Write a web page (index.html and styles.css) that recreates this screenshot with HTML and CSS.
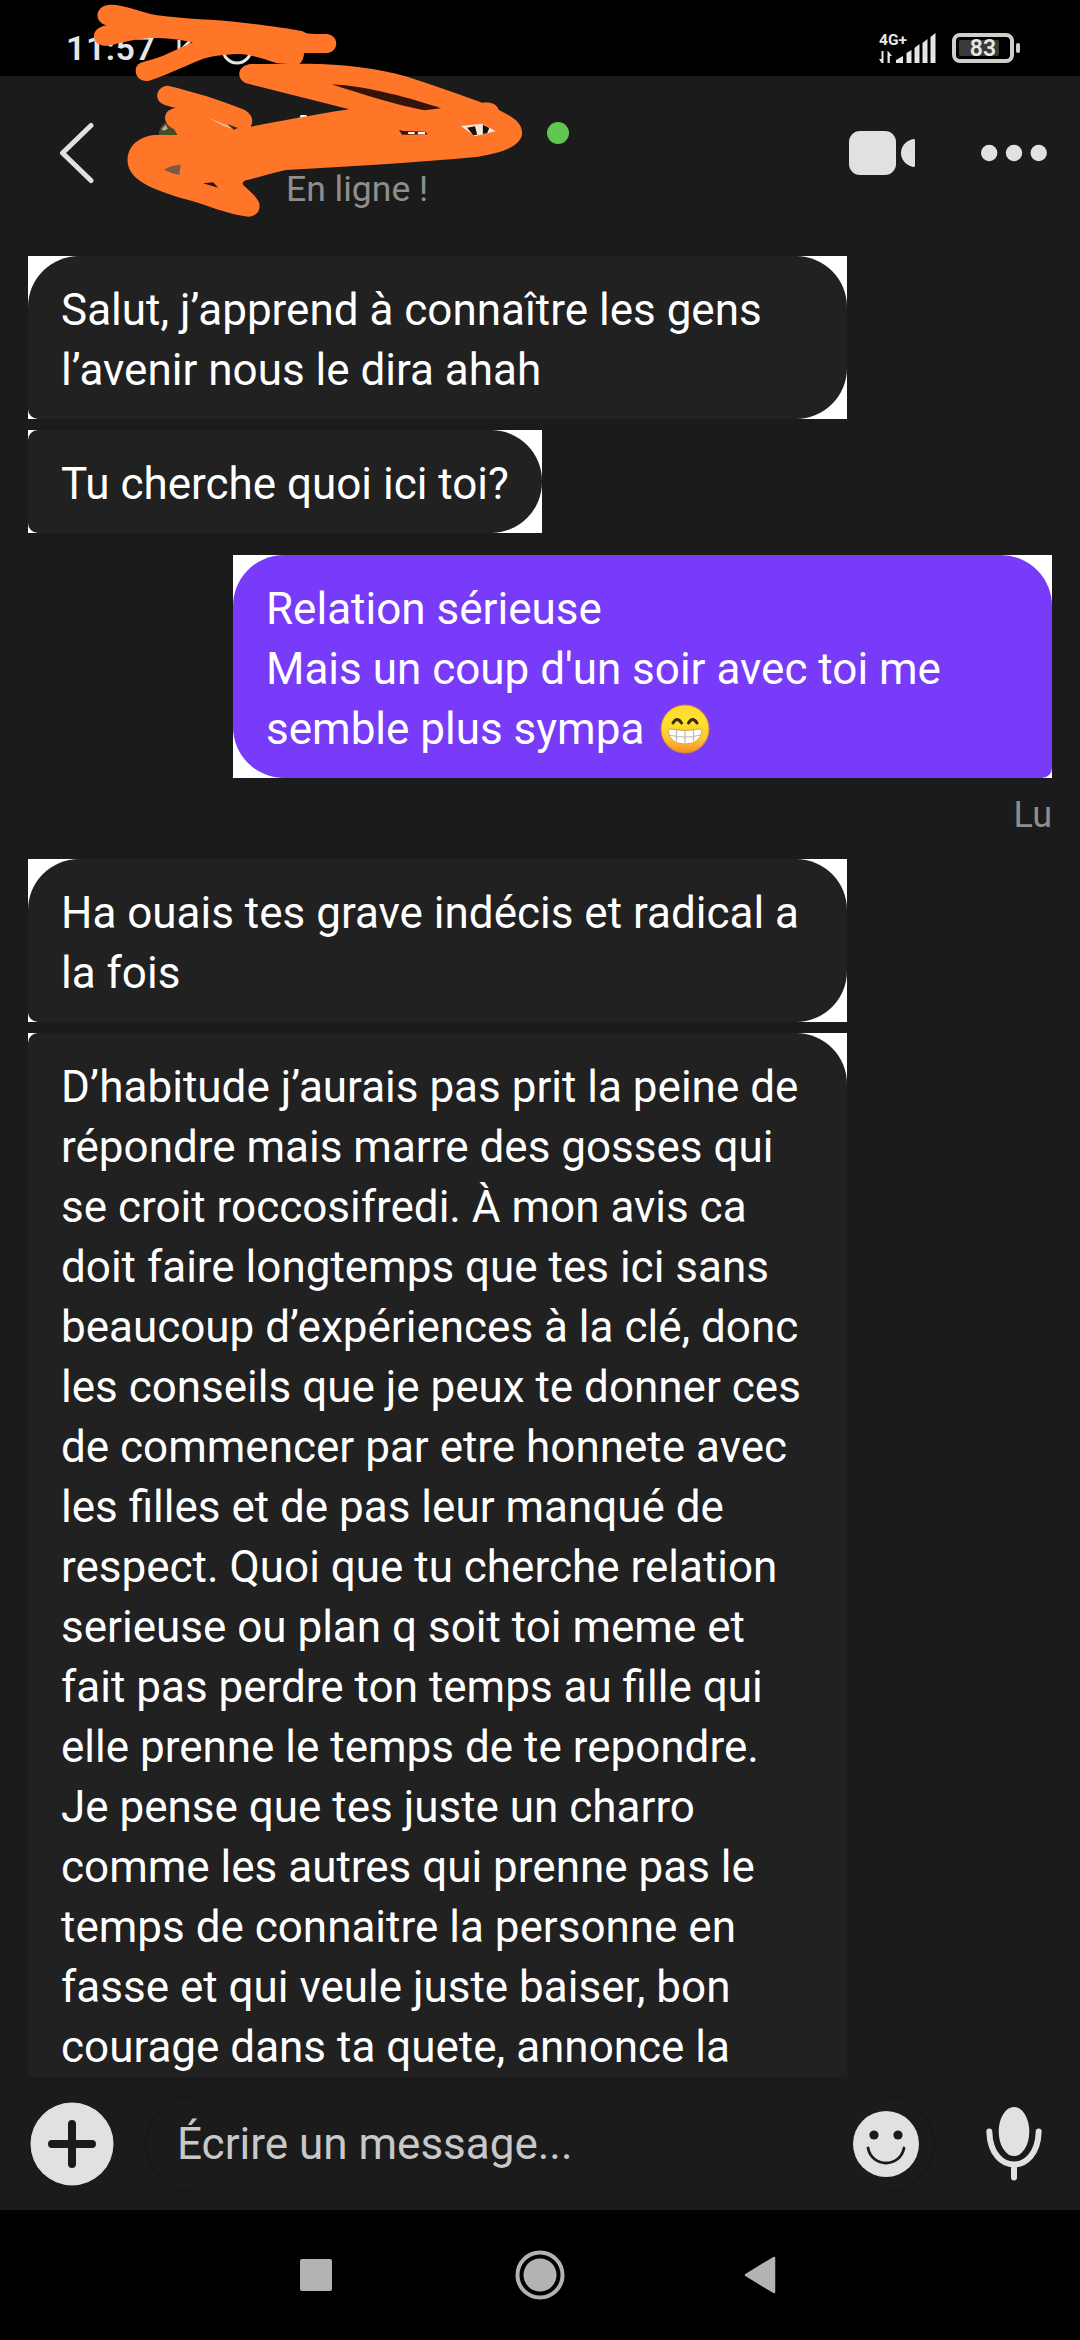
FILE: index.html
```html
<!DOCTYPE html>
<html lang="fr">
<head>
<meta charset="utf-8">
<title>Messages</title>
<link rel="stylesheet" href="styles.css">
</head>
<body>
<div class="screen">
  <div class="statusbar">
    <span class="clock">11:57</span>
    <svg class="notif" width="130" height="40" viewBox="0 0 130 40" fill="none" stroke="#e6e6e6" stroke-width="3">
      <path d="M3 10V20M4 21L14 11"/><circle cx="61" cy="19" r="14"/><path d="M126 20q1 8-4 12"/>
    </svg>
    <svg class="signal" width="60" height="34" viewBox="0 0 60 34" fill="#e6e6e6">
      <text x="0" y="12.500" class="net">4G+</text>
      <path d="M2.500 19h2v12h-2L0 27h2.500zM9 19l4 5h-2.200v7H8.500V19z"/>
      <path d="M17 31v-3l7-4v7zM27.500 31V21l5-3v13zM35.500 31V16l5-4v19zM43.500 31V11l5-4v24zM51.500 31V5l5-4v30z"/>
    </svg>
    <div class="battery"><span class="level"></span><b>83</b></div>
    <span class="tip"></span>
  </div>

  <header class="header">
    <svg class="back" width="36" height="64" viewBox="0 0 36 64" fill="none" stroke="#e1e1e1" stroke-width="5" stroke-linecap="round" stroke-linejoin="round"><path d="M33 5.500L4.500 33L33 60.500"/></svg>
    <div class="who">
      <div class="name">A</div>
      <div class="state">En ligne !</div>
    </div>
    <span class="online"></span>
    <svg class="video" width="68" height="46" viewBox="0 0 68 46" fill="#e1e1e1"><rect x="0" y="1" width="47" height="44" rx="11"/><path d="M66 9.500V36Q66 37 64 37C56 35 52 29 52 23S56 11 64 9Q66 9 66 9.500z"/></svg>
    <svg class="more" width="66" height="18" viewBox="0 0 66 18" fill="#e1e1e1"><circle cx="8.200" cy="9" r="8.200"/><circle cx="33" cy="9" r="8.200"/><circle cx="57.700" cy="9" r="8.200"/></svg>
    <svg class="scribble" width="560" height="250" viewBox="0 0 1568 750" preserveAspectRatio="none">
      <path fill="#4a4a2a" d="M443 405Q446 380 462 368L500 380V408H443z"/>
      <path fill="#b5b08a" d="M452 388L464 374L470 386L460 392z"/>
      <g fill="#ff7629">
        <path d="M310 14C350 14 390 35 440 46C520 58 600 58 680 68C740 76 800 84 848 94C856 100 862 101 880 102H918A29 29 0 0 1 918 159H850C852 172 846 186 836 194L776 190C740 178 700 162 668 162C620 164 590 168 560 180C510 202 460 228 418 242C395 246 380 232 380 212C380 195 390 188 410 183C450 175 500 145 540 127C490 115 450 113 420 114C380 117 340 128 305 137C280 140 263 128 263 108C263 92 278 80 298 76C280 70 272 58 273 44C274 26 290 14 310 14Z"/>
        <path d="M704 192L860 191C960 192 1060 205 1140 230C1220 258 1300 288 1350 308C1375 305 1390 310 1397 330C1430 348 1462 365 1462 400C1460 440 1400 460 1340 470C1180 486 1000 498 800 510C760 520 720 533 685 542C678 548 678 552 684 558C700 575 720 590 726 610C730 635 715 650 695 650C640 645 580 615 520 598C470 582 430 568 400 548C370 530 357 505 357 480C358 440 385 412 430 405H497L487 387C475 382 463 370 462 355C462 340 470 328 492 323C450 315 442 305 440 288C440 270 454 257 470 257C540 275 620 300 680 328C705 340 712 360 702 380C780 365 870 345 978 328L690 250C675 243 670 232 670 222C670 205 685 193 704 192Z"/>
      </g>
      <path fill="#35140a" d="M928 253C1030 258 1150 295 1235 325L1188 331C1110 315 1020 285 928 253Z"/>
      <path fill="#e8c49a" d="M580 352L640 378L655 388L625 377Z"/><path fill="#3b2116" d="M636 372L666 384L655 389Z"/>
      <path fill="#7a5a44" d="M459 509Q478 495 506 494L502 525Q478 520 459 509Z"/>
      <path fill="#35140a" d="M568 550L597 547L611 563Z"/>
      <path fill="#35140a" d="M1117 390L1130 393L1190 395L1198 403L1126 404Z"/><path fill="#fff" d="M1143 396H1161V402H1143zM1170 396H1190V403H1170z"/>
      <path fill="#f3e6da" d="M1290 378L1350 371L1388 394L1330 409Z"/><path fill="#1b1108" d="M1308 383L1330 379L1336 404L1325 406zM1352 374L1370 384L1364 400L1352 402z"/>
    </svg>
  </header>

  <main class="thread">
    <div class="shell in first"><p class="bubble">Salut, j’apprend à connaître les gens<br>l’avenir nous le dira ahah</p></div>
    <div class="shell in next short"><p class="bubble">Tu cherche quoi ici toi?</p></div>
    <div class="shell out"><p class="bubble">Relation sérieuse<br>Mais un coup d'un soir avec toi me<br>semble plus sympa <svg class="emoji" width="50" height="50" viewBox="0 0 50 50"><defs><linearGradient id="g" x2="0" y2="1"><stop offset="0" stop-color="#fdd835"/><stop offset=".3" stop-color="#fee22f"/><stop offset=".7" stop-color="#fdc930"/><stop offset="1" stop-color="#f4882a"/></linearGradient></defs><circle cx="25" cy="25" r="24" fill="url(#g)" stroke="#d88b2c"/><path d="M13 19q4-7 8.500 0M28.500 19q4-7 8.500 0" fill="none" stroke="#3a2a10" stroke-width="3" stroke-linecap="round"/><path d="M8 27q0-2 2-2Q25 28 40 25q2 0 2 2Q40 40 25 40T8 27z" fill="#fff" stroke="#d9a441"/><path d="M9 31q16 4 32 0M16.500 26v11M25 27v13M33.500 26v11" fill="none" stroke="#b9b9ae" stroke-width="1.200"/></svg></p></div>
    <div class="read">Lu</div>
    <div class="shell in first"><p class="bubble">Ha ouais tes grave indécis et radical a<br>la fois</p></div>
    <div class="shell in next"><p class="bubble">D’habitude j’aurais pas prit la peine de<br>répondre mais marre des gosses qui<br>se croit roccosifredi. À mon avis ca<br>doit faire longtemps que tes ici sans<br>beaucoup d’expériences à la clé, donc<br>les conseils que je peux te donner ces<br>de commencer par etre honnete avec<br>les filles et de pas leur manqué de<br>respect. Quoi que tu cherche relation<br>serieuse ou plan q soit toi meme et<br>fait pas perdre ton temps au fille qui<br>elle prenne le temps de te repondre.<br>Je pense que tes juste un charro<br>comme les autres qui prenne pas le<br>temps de connaitre la personne en<br>fasse et qui veule juste baiser, bon<br>courage dans ta quete, annonce la<br>&nbsp;</p></div>
  </main>

  <footer class="composer">
    <svg width="84" height="84" viewBox="0 0 84 84"><circle cx="42" cy="42" r="41.500" fill="#e1e1e1"/><path d="M42 22V62M22 42H62" stroke="#1b1b1b" stroke-width="8" stroke-linecap="round"/></svg>
    <div class="field"><span>Écrire un message...</span>
      <svg width="66" height="66" viewBox="0 0 66 66"><circle cx="33" cy="33" r="33" fill="#e1e1e1"/><circle cx="21" cy="24" r="4.600" fill="#1b1b1b"/><circle cx="45" cy="24" r="4.600" fill="#1b1b1b"/><path d="M15 37C19 57 47 57 51 37" fill="none" stroke="#1b1b1b" stroke-width="2.800" stroke-linecap="round"/></svg>
    </div>
    <svg class="mic" width="56" height="76" viewBox="0 0 56 76"><ellipse cx="28" cy="25.500" rx="15.300" ry="24.500" fill="#e1e1e1"/><path d="M3.300 25.500C4 48 16 58.500 28 58.500S52 48 52.700 25.500M28 59V71.500" fill="none" stroke="#e1e1e1" stroke-width="6" stroke-linecap="round"/></svg>
  </footer>

  <nav class="navbar">
    <svg width="32" height="32" viewBox="0 0 32 32"><rect width="32" height="32" rx="2" fill="#b3b3b3"/></svg>
    <svg class="home" width="50" height="50" viewBox="0 0 50 50"><circle cx="25" cy="25" r="16.500" fill="#b3b3b3"/><circle cx="25" cy="25" r="22.500" fill="none" stroke="#b3b3b3" stroke-width="4"/></svg>
    <svg class="prev" width="32" height="38" viewBox="0 0 32 38"><path d="M2 19L30 2V36Z" fill="#b3b3b3" stroke="#b3b3b3" stroke-width="2.500" stroke-linejoin="round"/></svg>
  </nav>
</div>
</body>
</html>
```
FILE: styles.css
```css
* { box-sizing: border-box; }
body { margin: 0; background: #1b1b1b; font-family: Roboto, "Noto Sans", sans-serif; }
svg { display: block; flex: none; }
.screen { width: 1080px; height: 2340px; display: flex; flex-direction: column; overflow: hidden; background: #1b1b1b; color: #fff; }

.statusbar { height: 76px; flex: none; display: flex; background: #000; color: #e6e6e6; }
.clock { width: 110px; margin: 28px 0 0 66px; font-size: 34px; line-height: 40px; font-weight: 600; letter-spacing: .5px; white-space: nowrap; }
.notif { margin: 30px 0 0 0; }
.signal { margin: 32px 0 0 573px; }
.net { font-size: 15.500px; font-weight: 700; }
.battery { position: relative; width: 62px; height: 30px; margin: 33px 0 0 13px; border: 4px solid #cfcfcf; border-radius: 8px; text-align: center; font-size: 23px; line-height: 23px; }
.battery b { position: relative; font-weight: 600; }
.level { position: absolute; left: 3px; top: 3px; width: 40px; height: 16px; border-radius: 2px; background: #3a3a3a; }
.tip { width: 4px; height: 10px; margin: 43px 0 0 2px; border-radius: 2px; background: #cfcfcf; }

.header { position: relative; height: 156px; flex: none; display: flex; border-bottom: 1px solid #181818; }
.back { margin: 44px 0 0 58px; }
.who { width: 222px; margin: 27px 0 0 192px; }
.name { height: 56px; padding-left: 4px; font-size: 40px; line-height: 56px; font-weight: 700; }
.state { font-size: 35.500px; line-height: 60px; color: #8e8e8e; white-space: nowrap; }
.online { width: 22px; height: 22px; margin: 46px 0 0 39px; border-radius: 50%; background: #60c650; }
.video { margin: 54px 0 0 280px; }
.more { margin: 68px 0 0 64px; }
.scribble { position: absolute; left: 0; top: -76px; }

.thread { height: 1845px; flex: none; padding: 24px 28px 0; display: flex; flex-direction: column; align-items: flex-start; overflow: hidden; }
.shell { flex: none; width: 819px; background: #fff; }
.bubble { margin: 0; padding: 24px 0 19px 33px; background: #212121; font-size: 44px; line-height: 60px; white-space: nowrap; }
.first .bubble { border-radius: 51px 51px 51px 10px; }
.next { margin-top: 11px; }
.next .bubble { border-radius: 10px 51px 51px 10px; }
.short { width: 514px; }
.out { align-self: flex-end; margin-top: 22px; }
.out .bubble { height: 223px; border-radius: 51px 51px 10px 51px; background: #783bfa; }
.emoji { display: inline-block; margin-left: 5px; vertical-align: -10px; }
.read { flex: none; align-self: flex-end; height: 81px; padding-top: 11px; font-size: 36px; line-height: 52px; color: #8e8e8e; }

.composer { height: 133px; flex: none; display: flex; align-items: center; padding: 0 37px 0 30px; }
.field { width: 790px; height: 98px; margin: 0 51px 0 31px; padding: 0 14px 0 30px; display: flex; align-items: center; justify-content: space-between; border: 2px solid #181818; border-radius: 49px; font-size: 44px; color: #c8c8c8; white-space: nowrap; }

.navbar { height: 130px; flex: none; display: flex; align-items: center; padding-left: 300px; background: #000; }
.home { margin-left: 183px; }
.prev { margin-left: 179px; }
```
